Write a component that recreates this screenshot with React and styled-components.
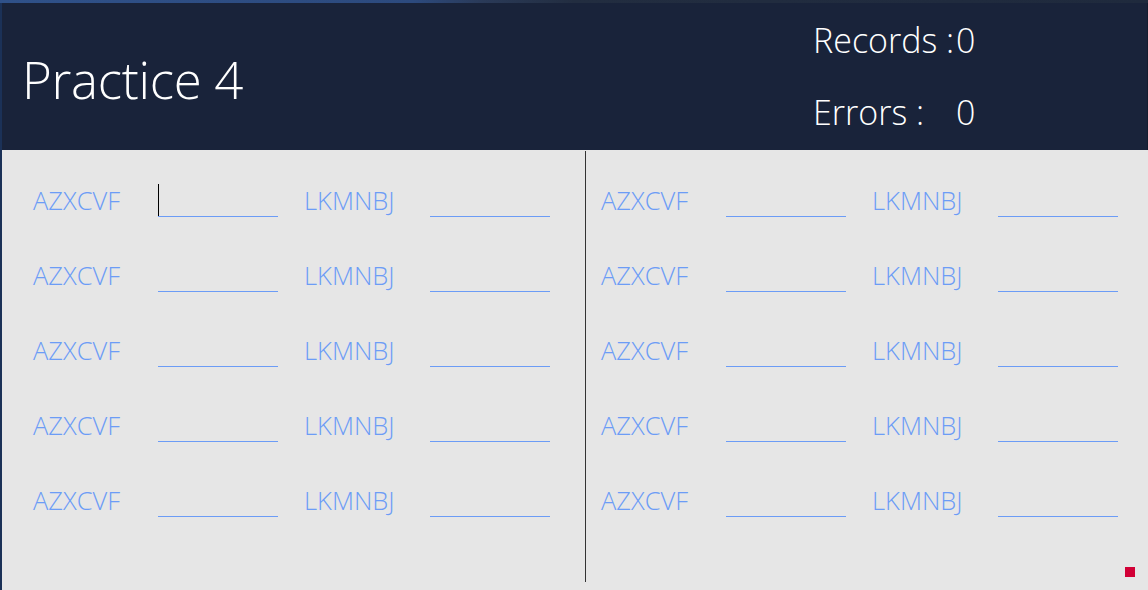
import React from "react";
import styled, { createGlobalStyle } from "styled-components";

const GlobalStyle = createGlobalStyle`
  html, body {
    margin: 0;
    padding: 0;
    background: #e6e6e6;
    overflow: hidden;
  }
  * {
    box-sizing: border-box;
  }
`;

const Window = styled.div`
  width: 1148px;
  height: 590px;
  display: flex;
  flex-direction: column;
  font-family: "Open Sans", "Noto Sans", sans-serif;
  font-weight: 300;
`;

const TopStrip = styled.div`
  height: 3px;
  background: linear-gradient(
    90deg,
    #2f5189 0%,
    #2c4a7e 36%,
    #2a3a58 42%,
    #222d40 50%,
    #1f2a3d 100%
  );
`;

const Frame = styled.div`
  flex: 1;
  display: flex;
  flex-direction: column;
  border-left: 2px solid #1b3157;
`;

const Header = styled.header`
  height: 147px;
  background: #19233a;
  color: #fff;
  display: flex;
  justify-content: space-between;
  border-right: 1px solid #141c2e;
`;

const Title = styled.h1`
  margin: 0;
  padding: 49px 0 0 20px;
  font-size: 51px;
  font-weight: 300;
  line-height: 54px;
  letter-spacing: -0.3px;
`;

const Stats = styled.div`
  width: 334px;
  padding-top: 1px;
  display: grid;
  grid-template-columns: 143px auto;
  grid-auto-rows: 72px;
  align-content: start;
  font-size: 34px;
  line-height: 72px;
`;

const StatLabel = styled.span`
  white-space: nowrap;
`;

const Body = styled.main`
  flex: 1;
  display: flex;
  position: relative;
`;

const Panel = styled.section`
  width: ${(p) => p.$width}px;
  padding: 34px 0 0 ${(p) => p.$padLeft}px;
  display: flex;
  flex-direction: column;
  gap: 42px;
`;

const Divider = styled.div`
  width: 1px;
  margin: 1px 0 8px;
  background: #333333;
`;

const Row = styled.div`
  display: grid;
  grid-template-columns: 125px 146px 126px 120px;
  height: 33px;
`;

const Label = styled.span`
  color: #6c9cf6;
  font-size: 25.5px;
  line-height: 33px;
  white-space: nowrap;
`;

const FieldWrap = styled.div`
  position: relative;
  width: 120px;
  height: 33px;

  ${(p) =>
    p.$active &&
    `
    &::before {
      content: "";
      position: absolute;
      left: 0;
      top: 0;
      width: 1px;
      height: 32px;
      background: #000;
    }
  `}
`;

const Field = styled.input`
  width: 120px;
  height: 33px;
  padding: 0;
  border: none;
  border-bottom: 1px solid #6c9cf6;
  background: transparent;
  outline: none;
  font-family: inherit;
  font-size: 22px;
  color: #333;
`;

const Marker = styled.div`
  position: absolute;
  right: 13px;
  bottom: 13px;
  width: 10px;
  height: 10px;
  background: #d10036;
`;

const rows = [0, 1, 2, 3, 4];

function PracticePanel({ width, padLeft, side }) {
  return (
    <Panel $width={width} $padLeft={padLeft}>
      {rows.map((i) => (
        <Row key={i}>
          <Label>AZXCVF</Label>
          <FieldWrap $active={side === "left" && i === 0}>
            <Field type="text" aria-label="AZXCVF" />
          </FieldWrap>
          <Label>LKMNBJ</Label>
          <FieldWrap>
            <Field type="text" aria-label="LKMNBJ" />
          </FieldWrap>
        </Row>
      ))}
    </Panel>
  );
}

export default function App() {
  return (
    <>
      <GlobalStyle />
      <Window>
        <TopStrip />
        <Frame>
          <Header>
            <Title>Practice 4</Title>
            <Stats>
              <StatLabel>Records :</StatLabel>
              <span>0</span>
              <StatLabel>Errors :</StatLabel>
              <span>0</span>
            </Stats>
          </Header>
          <Body>
            <PracticePanel width={583} padLeft={31} side="left" />
            <Divider />
            <PracticePanel width={562} padLeft={15} side="right" />
            <Marker />
          </Body>
        </Frame>
      </Window>
    </>
  );
}
